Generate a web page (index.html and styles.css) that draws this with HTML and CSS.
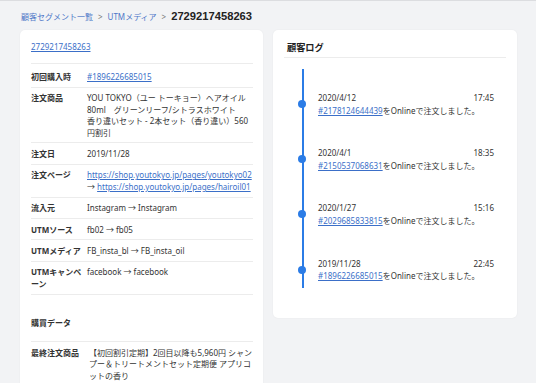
FILE: index.html
```html
<!DOCTYPE html>
<html lang="ja">
<head>
<meta charset="utf-8">
<link rel="stylesheet" href="styles.css">
</head>
<body>
<div class="page">
  <nav class="crumbs">
    <a class="crumb" href="#">顧客セグメント一覧</a>
    <span class="sep">&gt;</span>
    <a class="crumb" href="#">UTMメディア</a>
    <span class="sep">&gt;</span>
    <span class="title">2729217458263</span>
  </nav>
  <div class="columns">
    <section class="card detail">
      <div class="idline"><a href="#" class="link">2729217458263</a></div>
      <div class="rows">
        <div class="row first"><div class="label">初回購入時</div><div class="value"><a href="#" class="link">#1896226685015</a></div></div>
        <div class="row"><div class="label">注文商品</div><div class="value">YOU TOKYO（ユー トーキョー）ヘアオイル<br>80ml　グリーンリーフ/シトラスホワイト<br>香り違いセット - 2本セット（香り違い）560<br>円割引</div></div>
        <div class="row"><div class="label">注文日</div><div class="value">2019/11/28</div></div>
        <div class="row"><div class="label">注文ページ</div><div class="value"><a href="#" class="link">https://shop.youtokyo.jp/pages/youtokyo02</a><br>→ <a href="#" class="link">https://shop.youtokyo.jp/pages/hairoil01</a></div></div>
        <div class="row"><div class="label">流入元</div><div class="value">Instagram → Instagram</div></div>
        <div class="row"><div class="label">UTMソース</div><div class="value">fb02 → fb05</div></div>
        <div class="row"><div class="label">UTMメディア</div><div class="value">FB_insta_bl → FB_insta_oil</div></div>
        <div class="row"><div class="label">UTMキャンペーン</div><div class="value">facebook → facebook</div></div>
      </div>
      <h3 class="subhead">購買データ</h3>
      <div class="rows">
        <div class="row wide"><div class="label">最終注文商品</div><div class="value">【初回割引定期】2回目以降も5,960円 シャン<br>プー＆トリートメントセット定期便 アプリコ<br>ットの香り</div></div>
      </div>
    </section>
    <section class="card log">
      <h2 class="loghead">顧客ログ</h2>
      <ul class="timeline">
        <li class="event"><div class="when"><span>2020/4/12</span><span>17:45</span></div><div><a href="#" class="link">#2178124644439</a>をOnlineで注文しました。</div></li>
        <li class="event"><div class="when"><span>2020/4/1</span><span>18:35</span></div><div><a href="#" class="link">#2150537068631</a>をOnlineで注文しました。</div></li>
        <li class="event"><div class="when"><span>2020/1/27</span><span>15:16</span></div><div><a href="#" class="link">#2029685833815</a>をOnlineで注文しました。</div></li>
        <li class="event"><div class="when"><span>2019/11/28</span><span>22:45</span></div><div><a href="#" class="link">#1896226685015</a>をOnlineで注文しました。</div></li>
      </ul>
    </section>
  </div>
</div>
</body>
</html>
```

FILE: styles.css
```css
html, body {
  margin: 0;
  padding: 0;
}
body {
  background: #f2f3f5;
  border-top: 1px solid #dcdde0;
  font-family: "Noto Sans", "Noto Sans CJK JP", sans-serif;
  font-size: 8px;
  color: #333;
  height: 382px;
  overflow: hidden;
}
.page {
  padding: 9px 0 0 21px;
}
.crumbs {
  display: flex;
  align-items: baseline;
  gap: 5px;
  height: 20px;
}
.crumb {
  color: #4f78c8;
  text-decoration: none;
  font-size: 8px;
}
.sep {
  color: #777;
  font-size: 8px;
}
.title {
  font-family: "Liberation Sans", "Noto Sans CJK JP", sans-serif;
  font-weight: bold;
  font-size: 11.2px;
  color: #222;
}
.columns {
  display: flex;
  gap: 10px;
  align-items: flex-start;
  margin-left: -1px;
}
.card {
  background: #fff;
  border-radius: 5px;
  box-shadow: 0 0 2px rgba(0,0,0,0.06);
}
.detail {
  width: 243px;
  padding: 11px 10px 30px 11px;
  box-sizing: border-box;
  height: 400px;
}
.link {
  color: #3b6fc8;
  text-decoration: underline;
}
.idline {
  line-height: 12px;
  padding-bottom: 10px;
  border-bottom: 1px solid #ececec;
}
.row {
  display: flex;
  line-height: 11.5px;
  padding: 4.6px 0 4.3px;
  border-bottom: 1px solid #ececec;
}
.row.first {
  padding-top: 6.5px;
  padding-bottom: 4.5px;
}
.label {
  width: 56px;
  flex: none;
  font-weight: bold;
  color: #333;
}
.wide .label {
  width: 58px;
}
.value {
  flex: 1;
  color: #333;
  white-space: nowrap;
}
.row:nth-child(8) .value {
  white-space: normal;
}
.subhead {
  margin: 0;
  font-size: 8px;
  font-weight: bold;
  line-height: 12px;
  padding: 22px 0 12px;
  border-bottom: 1px solid #ececec;
}
.wide {
  padding-top: 5px;
}
.log {
  width: 244px;
  padding: 11px 11px 30px;
  box-sizing: border-box;
}
.loghead {
  margin: 0;
  font-size: 9.2px;
  font-weight: bold;
  line-height: 12px;
  padding: 1px 3px 3px;
  border-bottom: 1px solid #ececec;
  color: #222;
}
.timeline {
  list-style: none;
  margin: 11px 0 0 18px;
  padding: 23px 0 5px;
  border-left: 2px solid #2b7ce6;
}
.event {
  position: relative;
  padding: 0 12px 0 14px;
  line-height: 12.6px;
  margin-bottom: 30px;
}
.event:last-child {
  margin-bottom: 0;
}
.event::before {
  content: "";
  position: absolute;
  left: -6px;
  top: 8px;
  width: 8px;
  height: 8px;
  border-radius: 50%;
  background: #2b7ce6;
}
.when {
  display: flex;
  justify-content: space-between;
}
```
